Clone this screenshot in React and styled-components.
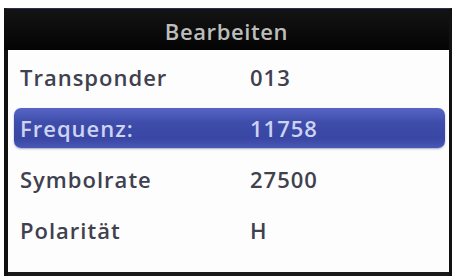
import styled, { createGlobalStyle } from 'styled-components';

const GlobalStyle = createGlobalStyle`
  html, body {
    margin: 0;
    padding: 0;
    background: #ffffff;
    overflow: hidden;
  }
  body {
    font-family: 'Open Sans', 'DejaVu Sans', sans-serif;
  }
`;

const rows = [
  { label: 'Transponder', value: '013' },
  { label: 'Frequenz:', value: '11758', active: true },
  { label: 'Symbolrate', value: '27500' },
  { label: 'Polarität', value: 'H' },
];

const App = () => {
  return (
    <>
      <GlobalStyle />
      <Screen>
        <Dialog>
          <TitleBar>Bearbeiten</TitleBar>
          <List>
            {rows.map((row) => (
              <Row key={row.label} $active={row.active}>
                <Label>{row.label}</Label>
                <Value>{row.value}</Value>
              </Row>
            ))}
          </List>
        </Dialog>
      </Screen>
    </>
  );
};

const Screen = styled.div`
  width: 457px;
  height: 276px;
  padding: 8px 5px 0 4px;
  box-sizing: border-box;
  display: flex;
`;

const Dialog = styled.div`
  flex: 1;
  display: flex;
  flex-direction: column;
  background: #0a0a0a;
  border-left: 4px solid #111;
  border-right: 3px solid #111;
  border-top: 1px solid #2a2f5a;
`;

const TitleBar = styled.div`
  height: 41px;
  display: flex;
  align-items: center;
  justify-content: center;
  background: linear-gradient(#141414, #040404);
  color: #bdbdbd;
  font-size: 22px;
  font-weight: 600;
  letter-spacing: 0.6px;
  margin-left: -4px;
  padding-top: 2px;
  box-sizing: border-box;
`;

const List = styled.div`
  flex: 1;
  background: #fdfdfd;
  border-bottom: 4px solid #1a1a1a;
  padding: 7px 4px 0 6px;
  display: grid;
  grid-auto-rows: 40px;
  row-gap: 11px;
  align-content: start;
`;

const Row = styled.div`
  display: grid;
  grid-template-columns: 230px 1fr;
  align-items: center;
  padding-left: 6px;
  border-radius: 7px;
  color: ${(p) => (p.$active ? '#cdd3f2' : '#40404f')};
  background: ${(p) =>
    p.$active
      ? 'linear-gradient(#5766c6 0%, #3f4dab 35%, #3946a3 75%, #4957b6 100%)'
      : 'transparent'};
  box-shadow: ${(p) => (p.$active ? '0 1px 2px rgba(40, 50, 120, 0.4)' : 'none')};
`;

const Label = styled.span`
  font-size: 22px;
  font-weight: 600;
  letter-spacing: 1px;
`;

const Value = styled.span`
  font-size: 22px;
  font-weight: 600;
  letter-spacing: 1px;
`;

export default App;
